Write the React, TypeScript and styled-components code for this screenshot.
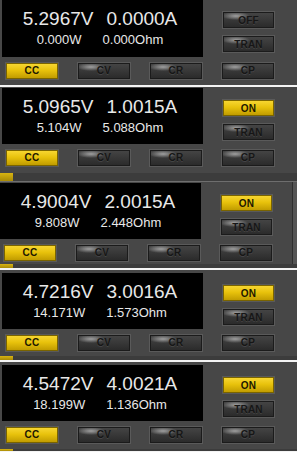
import React from 'react'
import styled, { createGlobalStyle, css } from 'styled-components'

const GlobalStyle = createGlobalStyle`
  html, body {
    margin: 0;
    padding: 0;
    background: #ffffff;
  }
  body {
    width: 297px;
    height: 452px;
    overflow: hidden;
    font-family: 'Liberation Sans', Arial, sans-serif;
  }
`

const Page = styled.div`
  width: 297px;
  display: flex;
  flex-direction: column;
`

const Shot = styled.div<{ $top: number; $bottom: number; $shift: number; $edge?: boolean }>`
  background: #474747;
  padding: ${(p) => p.$top}px 0 ${(p) => p.$bottom}px ${(p) => 2 + p.$shift}px;
  display: flex;
  flex-direction: column;
  gap: 5px;
  ${(p) =>
    p.$edge &&
    css`
      box-shadow: inset -4px 0 0 #555555, inset -5px 0 0 #2f2f2f;
    `}
`

const Upper = styled.div`
  display: flex;
`

const Screen = styled.div<{ $h: number }>`
  width: 201px;
  height: ${(p) => p.$h}px;
  background: #000000;
  box-sizing: border-box;
  padding: 9px 5px 0 0;
  display: flex;
  flex-direction: column;
  align-items: center;
  color: #e8e8e8;
`

const ReadLine = styled.div<{ $big?: boolean }>`
  display: flex;
  white-space: nowrap;
  ${(p) =>
    p.$big
      ? css`
          font-size: 19px;
          line-height: 19px;
          gap: 13px;
          margin-bottom: 5px;
        `
      : css`
          font-size: 13px;
          line-height: 13px;
          gap: 21px;
        `}
`

const SideCol = styled.div`
  margin-left: 20px;
  padding-top: 12px;
  display: flex;
  flex-direction: column;
  gap: 8px;
`

const KeyButton = styled.div<{ $lit?: boolean; $w?: number }>`
  width: ${(p) => p.$w ?? 52}px;
  height: 16px;
  box-sizing: border-box;
  display: flex;
  align-items: center;
  justify-content: center;
  font-size: 10px;
  font-weight: bold;
  letter-spacing: 0.2px;
  border: 1px solid #1b1b1b;
  box-shadow: 0 0 0 1px #5a5a5a;
  ${(p) =>
    p.$lit
      ? css`
          background: linear-gradient(#f7d631 0%, #e8c20c 45%, #c19c00 100%);
          color: #1d1800;
          border-color: #7a6400;
        `
      : css`
          background: radial-gradient(ellipse 14px 4px at 12px 3px, rgba(200, 200, 200, 0.7), rgba(200, 200, 200, 0) 100%),
            linear-gradient(#444444 0%, #353535 60%, #2b2b2b 100%);
          color: #161616;
          text-shadow: 0 1px 0 rgba(255, 255, 255, 0.1);
        `}
`

const ModeRow = styled.div`
  display: flex;
  gap: 20px;
  padding-left: 4px;
  height: 17px;
  align-items: center;
`

const Rule = styled.div<{ $h: number }>`
  height: ${(p) => p.$h}px;
  background: #f4f4f4;
`

const Scrap = styled.div<{ $h: number; $line?: boolean }>`
  height: ${(p) => p.$h}px;
  background: #3c3c3c;
  display: flex;
  ${(p) =>
    p.$line &&
    css`
      border-bottom: 1px solid #6e6e6e;
    `}
`

const ScrapTab = styled.div`
  width: 13px;
  background: linear-gradient(#d8b412, #a88a06);
`

type Reading = {
  v: string
  a: string
  w: string
  r: string
  on: boolean
  top: number
  bottom: number
  shift: number
  h: number
  edge?: boolean
}

const readings: Reading[] = [
  { v: '5.2967V', a: '0.0000A', w: '0.000W', r: '0.000Ohm', on: false, top: 0, bottom: 6, shift: 0, h: 57 },
  { v: '5.0965V', a: '1.0015A', w: '5.104W', r: '5.088Ohm', on: true, top: 1, bottom: 7, shift: 0, h: 56 },
  { v: '4.9004V', a: '2.0015A', w: '9.808W', r: '2.448Ohm', on: true, top: 1, bottom: 3, shift: -2, h: 56, edge: true },
  { v: '4.7216V', a: '3.0016A', w: '14.171W', r: '1.573Ohm', on: true, top: 3, bottom: 5, shift: 0, h: 56 },
  { v: '4.5472V', a: '4.0021A', w: '18.199W', r: '1.136Ohm', on: true, top: 3, bottom: 6, shift: 0, h: 56 }
]

const modes = ['CC', 'CV', 'CR', 'CP']

const LoadPanel = ({ item }: { item: Reading }) => (
  <Shot $top={item.top} $bottom={item.bottom} $shift={item.shift} $edge={item.edge}>
    <Upper>
      <Screen $h={item.h}>
        <ReadLine $big>
          <span>{item.v}</span>
          <span>{item.a}</span>
        </ReadLine>
        <ReadLine>
          <span>{item.w}</span>
          <span>{item.r}</span>
        </ReadLine>
      </Screen>
      <SideCol>
        <KeyButton $w={51} $lit={item.on}>
          {item.on ? 'ON' : 'OFF'}
        </KeyButton>
        <KeyButton $w={51}>TRAN</KeyButton>
      </SideCol>
    </Upper>
    <ModeRow>
      {modes.map((m) => (
        <KeyButton key={m} $lit={m === 'CC'}>
          {m}
        </KeyButton>
      ))}
    </ModeRow>
  </Shot>
)

export default function App() {
  return (
    <Page>
      <GlobalStyle />
      <LoadPanel item={readings[0]} />
      <Rule $h={2} />
      <LoadPanel item={readings[1]} />
      <Scrap $h={8} $line>
        <ScrapTab />
      </Scrap>
      <LoadPanel item={readings[2]} />
      <Scrap $h={4}>
        <ScrapTab />
      </Scrap>
      <Rule $h={2} />
      <LoadPanel item={readings[3]} />
      <Scrap $h={4}>
        <ScrapTab />
      </Scrap>
      <Rule $h={2} />
      <LoadPanel item={readings[4]} />
      <Scrap $h={2}>
        <ScrapTab />
      </Scrap>
      <Rule $h={2} />
    </Page>
  )
}
